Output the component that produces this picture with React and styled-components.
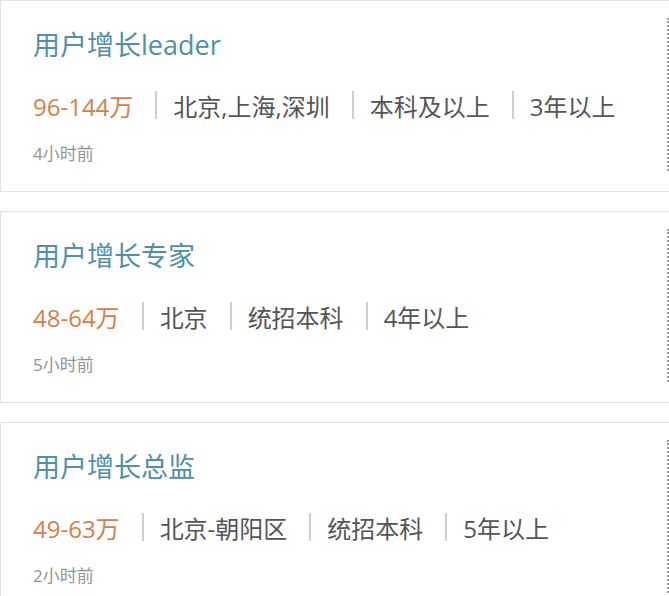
import React from 'react'
import styled, { createGlobalStyle } from 'styled-components'

const GlobalStyle = createGlobalStyle`
  html, body {
    margin: 0;
    padding: 0;
    background: #fff;
    overflow: hidden;
  }
  body {
    font-family: "Open Sans", "Noto Sans CJK SC", sans-serif;
  }
`

const List = styled.div`
  display: flex;
  flex-direction: column;
  gap: 19px;
  width: 720px;
`

const Card = styled.div`
  display: flex;
  border: 1px solid #e2e2e2;
  background: #fff;
`

const Main = styled.div`
  width: 634px;
  padding: 26px 0 25px 32px;
`

// right column, only its dotted edge shows in the crop
const Side = styled.div`
  flex: 1;
  margin: 17px 0 20px;
  border-left: 2px dotted #9a9a9a;
`

const Title = styled.h3`
  margin: 0;
  font-size: 27px;
  font-weight: 400;
  line-height: 36px;
  color: #5190a7;
`

const Row = styled.div`
  display: flex;
  align-items: center;
  margin-top: 24px;
  height: 36px;
  font-size: 24px;
  color: #555;
  white-space: nowrap;
`

const Salary = styled.span`
  color: #d4804a;
`

const Sep = styled.span`
  width: 2px;
  height: 28px;
  background: #cfcfcf;
  margin: 0 16px 0 22px;
`

const Time = styled.div`
  margin-top: 19px;
  font-size: 17px;
  line-height: 24px;
  color: #949494;
`

const jobs = [
  { title: '用户增长leader', salary: '96-144万', tags: ['北京,上海,深圳', '本科及以上', '3年以上'], time: '4小时前' },
  { title: '用户增长专家', salary: '48-64万', tags: ['北京', '统招本科', '4年以上'], time: '5小时前' },
  { title: '用户增长总监', salary: '49-63万', tags: ['北京-朝阳区', '统招本科', '5年以上'], time: '2小时前' },
]

const App = () => (
  <>
    <GlobalStyle />
    <List>
      {jobs.map((j) => (
        <Card key={j.title}>
          <Main>
            <Title>{j.title}</Title>
            <Row>
              <Salary>{j.salary}</Salary>
              {j.tags.map((t) => (
                <React.Fragment key={t}>
                  <Sep />
                  <span>{t}</span>
                </React.Fragment>
              ))}
            </Row>
            <Time>{j.time}</Time>
          </Main>
          <Side />
        </Card>
      ))}
    </List>
  </>
)

export default App
